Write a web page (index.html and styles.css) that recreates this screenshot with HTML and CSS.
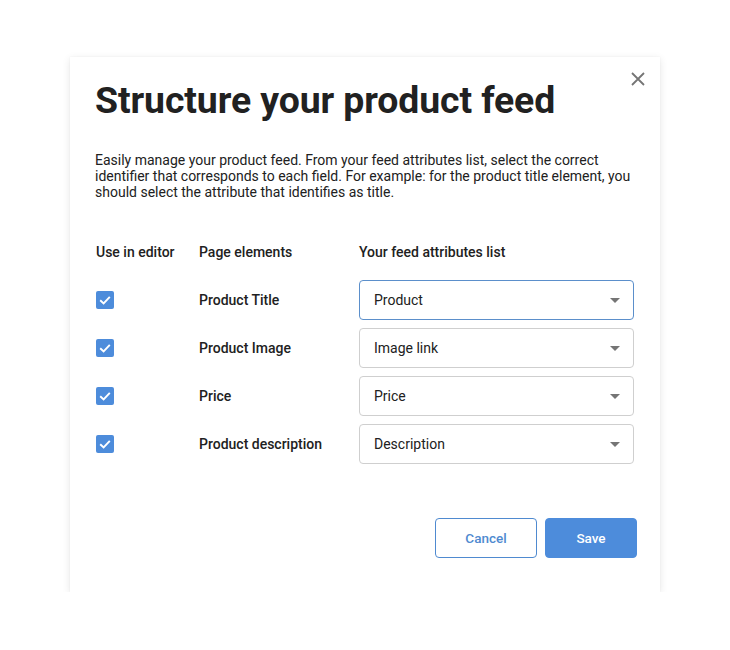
FILE: index.html
```html
<!DOCTYPE html>
<html lang="en">
<head>
<meta charset="utf-8">
<title>Structure your product feed</title>
<link rel="stylesheet" href="styles.css">
</head>
<body>
<div class="dialog">
  <button class="close" aria-label="Close">
    <svg width="14" height="14" viewBox="0 0 14 14"><path d="M1 1L13 13M13 1L1 13" stroke="#757575" stroke-width="1.8" fill="none"/></svg>
  </button>
  <h1 class="title">Structure your product feed</h1>
  <p class="intro">Easily manage your product feed. From your feed attributes list, select the correct identifier that corresponds to each field. For example: for the product title element, you should select the attribute that identifies as title.</p>
  <div class="grid">
    <div class="head">Use in editor</div>
    <div class="head">Page elements</div>
    <div class="head">Your feed attributes list</div>

    <div class="cell"><span class="check"><svg width="18" height="18" viewBox="0 0 18 18"><path d="M4.2 9.2L7.6 12.4L13.8 5.8" stroke="#fff" stroke-width="1.9" fill="none"/></svg></span></div>
    <div class="cell label">Product Title</div>
    <div class="cell"><div class="select focus"><span>Product</span><i class="arrow"></i></div></div>

    <div class="cell"><span class="check"><svg width="18" height="18" viewBox="0 0 18 18"><path d="M4.2 9.2L7.6 12.4L13.8 5.8" stroke="#fff" stroke-width="1.9" fill="none"/></svg></span></div>
    <div class="cell label">Product Image</div>
    <div class="cell"><div class="select"><span>Image link</span><i class="arrow"></i></div></div>

    <div class="cell"><span class="check"><svg width="18" height="18" viewBox="0 0 18 18"><path d="M4.2 9.2L7.6 12.4L13.8 5.8" stroke="#fff" stroke-width="1.9" fill="none"/></svg></span></div>
    <div class="cell label">Price</div>
    <div class="cell"><div class="select"><span>Price</span><i class="arrow"></i></div></div>

    <div class="cell"><span class="check"><svg width="18" height="18" viewBox="0 0 18 18"><path d="M4.2 9.2L7.6 12.4L13.8 5.8" stroke="#fff" stroke-width="1.9" fill="none"/></svg></span></div>
    <div class="cell label">Product description</div>
    <div class="cell"><div class="select"><span>Description</span><i class="arrow"></i></div></div>
  </div>
  <div class="actions">
    <button class="btn cancel">Cancel</button>
    <button class="btn save">Save</button>
  </div>
</div>
</body>
</html>
```

FILE: styles.css
```css
html, body {
  margin: 0;
  padding: 0;
  background: #fff;
}
body {
  font-family: Roboto, "Liberation Sans", sans-serif;
  color: #212121;
  padding: 57px 0 0 70px;
}
.dialog {
  position: relative;
  box-sizing: border-box;
  width: 590px;
  height: 535px;
  background: #fff;
  box-shadow: 0 2px 8px rgba(0,0,0,0.10), 0 0 2px rgba(0,0,0,0.04);
  padding: 21px 26px 0 25px;
}
.close {
  position: absolute;
  top: 15px;
  right: 15px;
  width: 14px;
  height: 14px;
  padding: 0;
  border: 0;
  background: none;
  display: block;
}
.close svg { display: block; }
.title {
  margin: 0;
  font-size: 37.4px;
  font-weight: 700;
  line-height: 44px;
  color: #212121;
  letter-spacing: -0.1px;
}
.intro {
  margin: 30px 0 0 0;
  font-size: 14px;
  line-height: 16px;
  color: #212121;
}
.grid {
  margin-top: 43px;
  display: grid;
  grid-template-columns: 103px 160px 1fr;
  grid-auto-rows: 48px;
  grid-template-rows: 33px;
  padding-left: 1px;
}
.head {
  font-size: 14px;
  font-weight: 500;
  color: #212121;
  line-height: 18px;
}
.cell {
  display: flex;
  align-items: center;
}
.label {
  font-size: 14px;
  font-weight: 500;
  color: #212121;
}
.check {
  width: 18px;
  height: 18px;
  border-radius: 2px;
  background: #4d8cdb;
  display: block;
}
.check svg { display: block; }
.select {
  box-sizing: border-box;
  width: 275px;
  height: 40px;
  border: 1px solid #cfcfcf;
  border-radius: 4px;
  display: flex;
  align-items: center;
  justify-content: space-between;
  padding: 0 13px 0 14px;
  font-size: 14px;
  color: #212121;
}
.select.focus {
  border-color: #5b8fcb;
}
.arrow {
  width: 0;
  height: 0;
  border-left: 5px solid transparent;
  border-right: 5px solid transparent;
  border-top: 5px solid #757575;
}
.actions {
  margin-top: 50px;
  margin-right: -3px;
  display: flex;
  justify-content: flex-end;
  gap: 8px;
}
.btn {
  height: 40px;
  box-sizing: border-box;
  border-radius: 4px;
  font-family: Roboto, "Liberation Sans", sans-serif;
  font-size: 13.5px;
  font-weight: 500;
  padding: 0;
}
.cancel {
  width: 102px;
  background: #fff;
  border: 1px solid #4f8ad0;
  color: #4f8ad0;
}
.save {
  width: 92px;
  background: #4d8cdb;
  border: 1px solid #4d8cdb;
  color: #fff;
}
```
